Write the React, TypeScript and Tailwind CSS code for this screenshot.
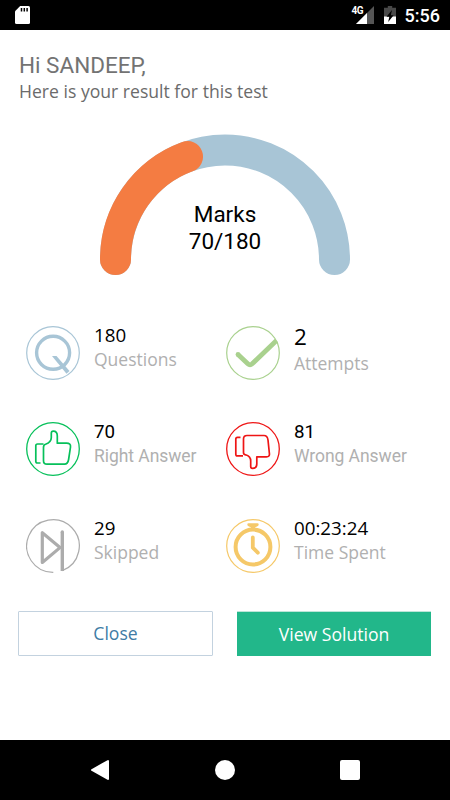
import type { ReactNode } from "react";

const QuestionIcon = () => (
  <svg width="54" height="54" viewBox="0 0 54 54" fill="none" stroke="#a8c5d6">
    <circle cx="27" cy="27" r="26.3" strokeWidth="1.2" />
    <circle cx="27.1" cy="26.8" r="16.5" strokeWidth="3.4" />
    <path d="M26 30 H30.5 L43.5 45 L40.5 47.8 Z" fill="#a8c5d6" stroke="none" />
  </svg>
);

const AttemptIcon = () => (
  <svg width="54" height="54" viewBox="0 0 54 54" fill="none" stroke="#a9d18e">
    <circle cx="27" cy="27" r="26.3" strokeWidth="1.2" />
    <path d="M12 28.5 L21.8 37.8 Q24 39.8 26.2 37.8 L50.5 14.5" strokeWidth="4.8" strokeLinejoin="round" />
    <circle cx="12" cy="28.5" r="2.4" fill="#a9d18e" stroke="none" />
  </svg>
);

const ThumbUpIcon = () => (
  <svg width="54" height="54" viewBox="0 0 54 54" fill="none" stroke="#06c05a">
    <circle cx="27" cy="27" r="26.3" strokeWidth="1.3" />
    <path
      d="M17.5 25.5 Q17.5 22.8 19.5 22.3 C23 21 25.3 19.3 25.3 15.5 V11.3 Q25.3 9.2 27.3 9.2 C30.2 9.2 31.3 11 31.3 14 V21.2 H40.5 Q45 21.2 44.5 25 L42.6 37.5 Q41.8 42.2 38.5 42.2 H21 Q17.5 42.2 17.5 38.7 Z"
      strokeWidth="1.7"
      strokeLinejoin="round"
    />
    <path d="M17.5 22 H11.5 Q9.8 22 9.8 23.7 V39.3 Q9.8 41 11.5 41 H14.5" strokeWidth="1.7" />
  </svg>
);

const ThumbDownIcon = () => (
  <svg width="54" height="54" viewBox="0 0 54 54" fill="none" stroke="#ee1515">
    <circle cx="27" cy="27" r="26.3" strokeWidth="1.3" />
    <path
      d="M17.5 30.5 Q17.5 32.5 19.5 32.8 C23 33.7 24.7 36 24.7 39 V44.6 Q24.7 46.4 26.5 46.4 C29.6 46.4 30.8 44.8 30.8 42 V34.8 H40.5 Q43.8 34.8 43.4 31.5 L42 18 Q41.4 13.5 38 13.5 H21 Q17.5 13.5 17.5 17 Z"
      strokeWidth="1.7"
      strokeLinejoin="round"
    />
    <path d="M14.5 15.3 H11.5 Q9.8 15.3 9.8 17 V32.2 Q9.8 33.9 11.5 33.9 H17" strokeWidth="1.7" />
  </svg>
);

const SkipIcon = () => (
  <svg width="54" height="54" viewBox="0 0 54 54" fill="none" stroke="#acacac">
    <path d="M27.3 53.3 A26.3 26.3 0 1 1 36.3 51.6" strokeWidth="1.2" />
    <path d="M16.3 13.8 V43.5 L34 28.6 Z" strokeWidth="3.2" strokeLinejoin="round" />
    <path d="M36.3 13 V52" strokeWidth="3.4" />
    <circle cx="36.3" cy="13" r="1.7" fill="#acacac" stroke="none" />
  </svg>
);

const TimerIcon = () => (
  <svg width="54" height="54" viewBox="0 0 54 54" fill="none" stroke="#f5c868">
    <circle cx="27" cy="27" r="26.3" strokeWidth="1.2" />
    <circle cx="27" cy="28" r="17.4" strokeWidth="4" />
    <path d="M21.3 5.6 Q21.3 4.3 22.6 4.3 H31.4 Q32.7 4.3 32.7 5.6 Q32.7 7.2 31 7.6 L29.2 8.2 V11 H24.8 V8.2 L23 7.6 Q21.3 7.2 21.3 5.6 Z" fill="#f5c868" stroke="none" />
    <path d="M26.8 18.5 V28.7 L31.8 33.7" strokeWidth="3.8" strokeLinecap="round" strokeLinejoin="round" />
  </svg>
);

const open = "font-['Open_Sans',sans-serif]";
const roboto = "font-[Roboto,sans-serif]";

type StatProps = {
  icon: ReactNode;
  value: string;
  label: string;
  valueClass: string;
  labelClass: string;
};

function Stat({ icon, value, label, valueClass, labelClass }: StatProps) {
  return (
    <div className="flex h-[96.5px]">
      <div className="w-[54px] shrink-0">{icon}</div>
      <div className="ml-[14px] flex flex-col whitespace-nowrap">
        <span className={`text-black ${valueClass}`}>{value}</span>
        <span className={`text-[#b0b0b0] ${labelClass}`}>{label}</span>
      </div>
    </div>
  );
}

const openValue = `text-[18.75px] leading-[18px] ${open}`;
const openLabel = `text-[17.5px] mt-[2px] leading-[26px] ${open}`;
const robotoValue = `text-[18.75px] leading-[21px] ${roboto}`;
const robotoLabel = `text-[17.5px] leading-[26px] tracking-[-0.05px] ${roboto}`;

export default function App() {
  return (
    <div className="flex h-[800px] w-[450px] flex-col overflow-hidden bg-white">
      <header className="flex h-[30px] shrink-0 items-center bg-black pr-[10px] pl-[15px]">
        <svg width="15" height="18" viewBox="0 0 15 18">
          <path d="M5.2 0 H13.5 Q15 0 15 1.5 V16.5 Q15 18 13.5 18 H1.5 Q0 18 0 16.5 V5.2 Z" fill="#fff" />
          <path d="M6.5 2 V5.5 M9.3 2 V5.5 M12.1 2 V5.5" stroke="#000" strokeWidth="1.5" />
        </svg>
        <div className="ml-auto flex items-center">
          <span className={`-mt-[9px] w-[11px] text-[10px] leading-[10px] font-bold tracking-[-0.6px] text-white ${roboto}`}>4G</span>
          <svg className="-ml-[7px]" width="18" height="18" viewBox="0 0 18 18">
            <path d="M18 0 V18 H0 L11 7 Z" fill="#555" />
            <path d="M11 7 V18 H0 Z" fill="#fff" />
          </svg>
          <svg className="ml-[10px]" width="12" height="18" viewBox="0 0 12 18">
            <path d="M3.8 0 H8.2 V1.8 H12 V18 H0 V1.8 H3.8 Z" fill="#484848" />
            <path d="M0 10.5 H12 V18 H0 Z" fill="#fff" />
            <path d="M8 4 L2.5 10.8 H5.3 L4.2 16 L9.6 9.2 H6.8 Z" fill="#000" />
          </svg>
          <span className={`mt-px ml-[9px] text-[18px] leading-[30px] font-medium text-white ${roboto}`}>5:56</span>
        </div>
      </header>

      <main className="flex flex-1 flex-col px-[19px]">
        <h1 className={`mt-[21px] text-[22.5px] leading-[28px] text-[#737373] ${roboto}`}>Hi SANDEEP,</h1>
        <p className={`text-[17.6px] leading-[24px] whitespace-nowrap text-[#6b6b6b] ${open}`}>Here is your result for this test</p>

        <section className="mx-auto mt-[31px] grid h-[142px] w-[250px]">
          <svg className="col-start-1 row-start-1" width="250" height="142" viewBox="0 0 250 142" fill="none" strokeWidth="31" strokeLinecap="round">
            <path d="M15.5 125.5 A109.5 109.5 0 0 1 234.5 125.5" stroke="#a8c5d6" />
            <path d="M15.5 125.5 A109.5 109.5 0 0 1 87.5 22.6" stroke="#f47c42" />
          </svg>
          <div className={`col-start-1 row-start-1 pt-[67px] text-center text-[22.5px] leading-[27px] text-black ${roboto}`}>
            <div>Marks</div>
            <div>70/180</div>
          </div>
        </section>

        <section className="mt-[49.5px] ml-[7px] grid grid-cols-[200px_200px]">
          <Stat icon={<QuestionIcon />} value="180" label="Questions" valueClass={openValue} labelClass={openLabel} />
          <Stat icon={<AttemptIcon />} value="2" label="Attempts" valueClass={`text-[22.5px] leading-[22px] ${open}`} labelClass={openLabel} />
          <Stat icon={<ThumbUpIcon />} value="70" label="Right Answer" valueClass={robotoValue} labelClass={robotoLabel} />
          <Stat icon={<ThumbDownIcon />} value="81" label="Wrong Answer" valueClass={robotoValue} labelClass={robotoLabel} />
          <Stat icon={<SkipIcon />} value="29" label="Skipped" valueClass={openValue} labelClass={openLabel} />
          <Stat icon={<TimerIcon />} value="00:23:24" label="Time Spent" valueClass={openValue} labelClass={openLabel} />
        </section>

        <div className={`-mt-[4px] -ml-px flex w-[413px] justify-between text-[17.6px] ${open}`}>
          <button className="h-[45px] w-[195px] rounded-[1px] border border-[#c3d2df] bg-white text-[#407ba5]">Close</button>
          <button className="h-[45px] w-[194px] border-t border-[#bde5d8] bg-[#22b78a] text-white">View Solution</button>
        </div>
      </main>

      <footer className="flex h-[60px] shrink-0 items-center justify-between bg-black px-[90px]">
        <svg width="20" height="22" viewBox="0 0 20 22">
          <path d="M2 11 L18 2 V20 Z" fill="#fff" stroke="#fff" strokeWidth="2" strokeLinejoin="round" />
        </svg>
        <div className="size-5 rounded-full bg-white" />
        <div className="size-5 rounded-[2px] bg-white" />
      </footer>
    </div>
  );
}
